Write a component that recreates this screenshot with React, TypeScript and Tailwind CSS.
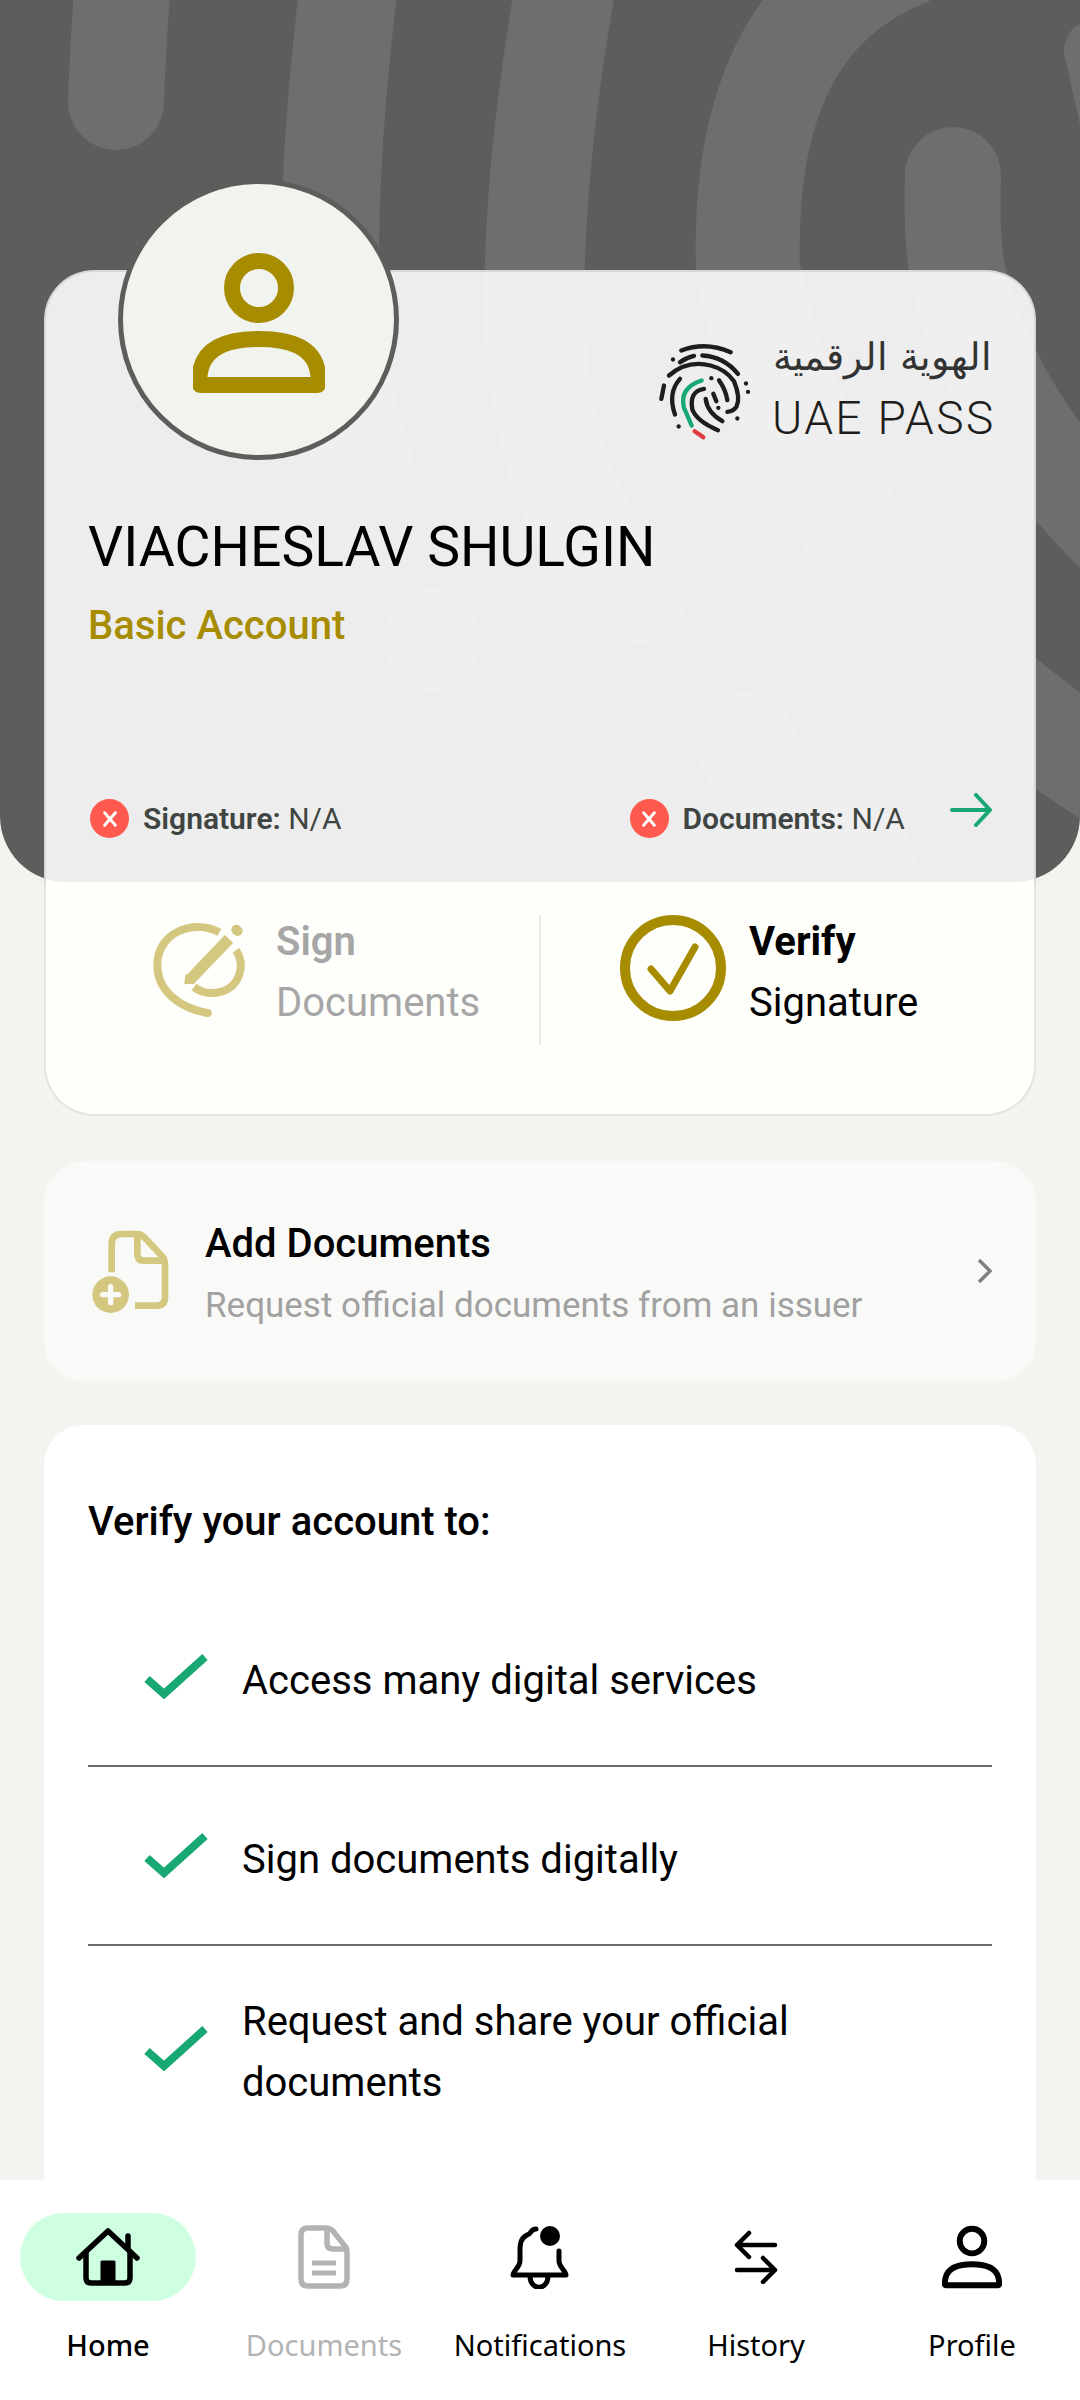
import React from 'react';

const Swirls = () => (
  <svg viewBox="0 0 1080 882" className="absolute inset-0 w-full h-full" fill="none" stroke="#6d6f6c" strokeLinecap="round">
    <path d="M116 102 Q118 40 126 -60" strokeWidth="96" />
    <path d="M352 -40 Q330 130 330 260 Q332 380 362 455" strokeWidth="98" />
    <path d="M570 -40 Q530 180 535 330 Q545 510 638 594" strokeWidth="100" />
    <path d="M905 -45 Q740 20 748 270 Q780 430 900 600 Q980 690 1100 770" strokeWidth="104" />
    <path d="M953 175 Q950 260 965 300 Q1000 420 1110 530" strokeWidth="96" />
    <path d="M1094 50 L1112 130" strokeWidth="60" />
    <path d="M432 636 L432 644" strokeWidth="96" />
    <path d="M745 742 Q765 800 865 860" strokeWidth="100" />
  </svg>
);

const PersonIcon = ({ color, w = 16 }: { color: string; w?: number }) => (
  <svg viewBox="0 0 132 140" className="w-full h-full" fill="none" stroke={color} strokeWidth={w} strokeLinejoin="round">
    <circle cx="66" cy="35" r="27" />
    <path d="M8 132 Q4 132 8 115 C14 92 40 86 66 86 C92 86 118 92 124 115 Q128 132 124 132 Z" />
  </svg>
);

const Fingerprint = () => (
  <svg viewBox="112 88 282 296" className="w-[94px] h-[99px]" fill="none" stroke="#1d1d1b" strokeWidth="13" strokeLinecap="round">
    <path d="M182 113 Q255 85 330 118" />
    <path d="M157 140 L157 140" />
    <path d="M178 148 Q195 135 220 129" />
    <path d="M245 128 Q310 132 352 183" />
    <path d="M145 188 Q200 140 270 158 Q315 170 340 205 Q360 255 348 280 Q340 295 320 297" />
    <path d="M130 218 L122 258" />
    <path d="M178 198 Q140 240 163 305" />
    <path d="M243 203 Q175 225 190 285 L213 338" stroke="#18a873" />
    <path d="M272 196 L272 196" />
    <path d="M295 202 Q315 230 320 262" />
    <path d="M250 228 Q205 235 215 290 Q228 325 292 352" />
    <path d="M255 258 Q260 300 305 325" />
    <path d="M278 243 L287 265" />
    <path d="M293 285 L293 285" />
    <path d="M376 212 L376 212" />
    <path d="M382 237 L382 237" />
    <path d="M350 317 L350 317" />
    <path d="M174 341 L174 341" />
    <path d="M222 355 L248 373" stroke="#e03a3e" />
  </svg>
);

const RedX = () => (
  <span className="w-[39px] h-[39px] rounded-full bg-[#ff5a4d] flex items-center justify-center shrink-0">
    <svg viewBox="0 0 20 20" className="w-[18px] h-[18px]" fill="none" stroke="#ffffff" strokeWidth="3.2" strokeLinecap="round">
      <path d="M4 3 L16 17 M16 3 L4 17" />
    </svg>
  </span>
);

const SignIcon = () => (
  <svg viewBox="60 55 300 300" className="w-[100px] h-[100px]" fill="none" stroke="#d4c77f" strokeWidth="24" strokeLinecap="round">
    <path d="M268 98 C190 55 82 100 82 195 C82 275 150 325 232 340" strokeLinecap="butt" />
    <path d="M232 340 L233 340" />
    <path d="M318 152 C350 200 325 262 275 276 C245 284 215 280 192 262" strokeLinecap="butt" />
    <path d="M180 240 L297 118" strokeWidth="34" strokeLinecap="butt" />
    <path d="M165 252 L168 226 L192 250 Z" fill="#d4c77f" strokeWidth="4" strokeLinejoin="round" />
    <path d="M319 90 L323 94" strokeWidth="30" />
  </svg>
);

const VerifyIcon = () => (
  <svg viewBox="0 0 106 106" className="w-[106px] h-[106px]" fill="none" stroke="#a88c00">
    <circle cx="53" cy="53" r="48" strokeWidth="10" />
    <path d="M31 54 L50 76 L75 32" strokeWidth="7" strokeLinecap="round" strokeLinejoin="round" />
  </svg>
);

const AddDocIcon = () => (
  <svg viewBox="36 56 234 250" className="w-[78px] h-[84px]" fill="none" stroke="#d4c77f" strokeWidth="20">
    <path d="M95 185 L95 100 Q95 70 125 70 L170 70 Q185 70 195 82 L245 135 Q255 145 255 165 L255 260 Q255 285 230 285 L165 285" />
    <path d="M172 72 L172 130 Q172 150 192 150 L253 150" />
    <circle cx="92" cy="252" r="55" fill="#d4c77f" stroke="none" />
    <path d="M68 252 L116 252 M92 228 L92 276" stroke="#f9faf7" strokeWidth="16" strokeLinecap="round" />
  </svg>
);

const CheckRow = ({ text, last }: { text: React.ReactNode; last?: boolean }) => (
  <div className={`flex items-center pl-[56px] ${last ? 'pt-[45px]' : 'h-[179px] pt-[7px] border-b-2 border-[#6b6b6b]'}`}>
    <svg viewBox="0 0 64 46" className="w-[64px] h-[46px] shrink-0 -mt-[8px]" fill="none" stroke="#18a873" strokeWidth="8">
      <path d="M3 26 L20 41 L61 4" />
    </svg>
    <div className="ml-[34px] text-[40px] leading-[61px] text-black">{text}</div>
  </div>
);

const NavItem = ({ label, icon, active, muted }: { label: string; icon: React.ReactNode; active?: boolean; muted?: boolean }) => (
  <div className="flex flex-col items-center">
    <div className={`w-[176px] h-[88px] rounded-full flex items-center justify-center ${active ? 'bg-[#ceffe0]' : ''}`}>{icon}</div>
    <div className={`mt-[26px] text-[29px] leading-[36px] font-['Noto_Sans',sans-serif] ${active ? 'font-medium text-black' : muted ? 'text-[#b3b3b3]' : 'text-black'}`}>{label}</div>
  </div>
);

export default function App() {
  return (
    <div className="relative w-[1080px] h-[2400px] overflow-hidden bg-[#f2f4f0] font-['Roboto',sans-serif] text-black">
      <div className="absolute top-0 left-0 w-full h-[882px] bg-[#5c5e5b] rounded-b-[66px] overflow-hidden">
        <Swirls />
      </div>

      <div className="relative pt-[270px] px-[44px]">
        {/* main card */}
        <div className="relative">
          <div className="h-[612px] rounded-t-[50px] bg-white/[.89] border-t-2 border-x-2 border-[#d8d8d8] px-[42px] flex flex-col">
            <div className="flex justify-end items-center gap-[20px] mt-[66px] h-[106px]">
              <Fingerprint />
              <div className="w-[220px] flex flex-col">
                <div dir="rtl" className="text-[38px] leading-[50px] font-['DejaVu_Sans',sans-serif] font-extralight text-[#333333] whitespace-nowrap -mt-[5px]">الهوية الرقمية</div>
                <div className="text-[46px] leading-[54px] mt-[9px] font-light text-[#1d1d1b] tracking-[2.4px] whitespace-nowrap">UAE PASS</div>
              </div>
            </div>
            <div className="mt-[68px] text-[55.3px] leading-[72px] whitespace-nowrap">VIACHESLAV SHULGIN</div>
            <div className="mt-[14px] text-[40px] leading-[56px] font-medium text-[#a88c00]">Basic Account</div>
            <div className="flex items-center mt-[142px] pl-[2px] text-[30px] text-[#3f4542]">
              <RedX />
              <span className="ml-[14px]"><span className="font-semibold">Signature:</span> N/A</span>
              <span className="ml-[288px]"><RedX /></span>
              <span className="ml-[14px]"><span className="font-semibold">Documents:</span> N/A</span>
              <svg viewBox="0 0 42 34" className="w-[42px] h-[34px] ml-auto -mt-[18px]" fill="none" stroke="#18a873" strokeWidth="4" strokeLinecap="round" strokeLinejoin="round">
                <path d="M2 17 L40 17 M26 2 L40 17 L26 32" />
              </svg>
            </div>
          </div>

          <div className="h-[234px] rounded-b-[50px] bg-[#fefefb] border-x-2 border-b-2 border-[#e4e5e2] pt-[33px]">
            <div className="flex h-[130px]">
              <div className="w-[493px] flex pl-[104px] pt-[3px]">
                <SignIcon />
                <div className="ml-[26px] text-[40px] leading-[61px] text-[#a6a6a6] -mt-[7px]">
                  <div className="font-semibold">Sign</div>
                  <div>Documents</div>
                </div>
              </div>
              <div className="w-[2px] bg-[#e8e8e8]" />
              <div className="flex pl-[79px]">
                <VerifyIcon />
                <div className="ml-[23px] text-[40px] leading-[61px] -mt-[4px]">
                  <div className="font-bold">Verify</div>
                  <div>Signature</div>
                </div>
              </div>
            </div>
          </div>

          <div className="absolute -top-[91px] left-[74px] w-[281px] h-[281px] rounded-full bg-[#f0f3ee] border-[5px] border-[#5c5e5b] flex items-center justify-center">
            <div className="w-[132px] h-[140px] mt-[7px]"><PersonIcon color="#a88c00" /></div>
          </div>
        </div>

        {/* add documents */}
        <div className="mt-[45px] h-[220px] rounded-[40px] bg-[#f9faf7] flex items-center pl-[48px] pr-[44px]">
          <AddDocIcon />
          <div className="ml-[35px] flex-1 pt-[8px]">
            <div className="text-[40px] leading-[60px] font-medium">Add Documents</div>
            <div className="mt-[2px] text-[35px] leading-[60px] text-[#a1a1a1]">Request official documents from an issuer</div>
          </div>
          <svg viewBox="0 0 15 26" className="w-[15px] h-[26px]" fill="none" stroke="#808080" strokeWidth="3.5">
            <path d="M2 2 L13 13 L2 24" />
          </svg>
        </div>

        {/* verify card */}
        <div className="mt-[44px] h-[800px] rounded-[40px] bg-white px-[44px] pt-[67px]">
          <div className="text-[40px] leading-[60px] font-medium">Verify your account to:</div>
          <div className="mt-[36px]">
            <CheckRow text="Access many digital services" />
            <CheckRow text="Sign documents digitally" />
            <CheckRow last text={<>Request and share your official<br />documents</>} />
          </div>
        </div>
      </div>

      {/* bottom nav */}
      <div className="absolute bottom-0 left-0 w-full h-[220px] bg-white pt-[33px] grid grid-cols-5">
        <NavItem active label="Home" icon={
          <svg viewBox="0 0 64 58" className="w-[64px] h-[58px]" fill="none" stroke="#000" strokeWidth="5.5" strokeLinecap="round" strokeLinejoin="round">
            <path d="M3 30 L32 3 L61 30" />
            <path d="M52 8 L52 20" />
            <path d="M10 24 L10 50 Q10 55 15 55 L49 55 Q54 55 54 50 L54 24" />
            <rect x="26" y="34" width="12" height="21" fill="#000" strokeWidth="3" />
          </svg>
        } />
        <NavItem muted label="Documents" icon={
          <svg viewBox="0 0 52 64" className="w-[52px] h-[64px]" fill="none" stroke="#b3b3b3" strokeWidth="5.5" strokeLinejoin="round">
            <path d="M10 3 L28 3 Q32 3 35 6 L46 20 Q49 23 49 27 L49 54 Q49 61 42 61 L10 61 Q3 61 3 54 L3 10 Q3 3 10 3 Z" />
            <path d="M29 3 L29 18 Q29 24 35 24 L49 24" />
            <path d="M14 38 L38 38 M14 48 L38 48" strokeWidth="5" />
          </svg>
        } />
        <NavItem label="Notifications" icon={
          <svg viewBox="0 0 60 64" className="w-[60px] h-[64px]" fill="none" stroke="#000" strokeWidth="5" strokeLinecap="round" strokeLinejoin="round">
            <path d="M26 4 C20 4 22 9 17 10 C11 13 10 18 10 26 L10 36 C10 42 3 46 3 50 L56 50 C56 46 49 42 49 36 L49 26" />
            <path d="M20 51 C20 66 38 66 38 51" />
            <circle cx="40" cy="11" r="10" fill="#000" stroke="none" />
          </svg>
        } />
        <NavItem label="History" icon={
          <svg viewBox="0 0 44 54" className="w-[44px] h-[54px]" fill="none" stroke="#000" strokeWidth="4.5" strokeLinecap="round" strokeLinejoin="round">
            <path d="M41 15 L3 15 M15 3 L3 15 L15 27" />
            <path d="M3 40 L41 40 M29 28 L41 40 L29 52" />
          </svg>
        } />
        <NavItem label="Profile" icon={
          <div className="w-[60px] h-[64px]"><PersonIcon color="#000" w={13} /></div>
        } />
      </div>
    </div>
  );
}
